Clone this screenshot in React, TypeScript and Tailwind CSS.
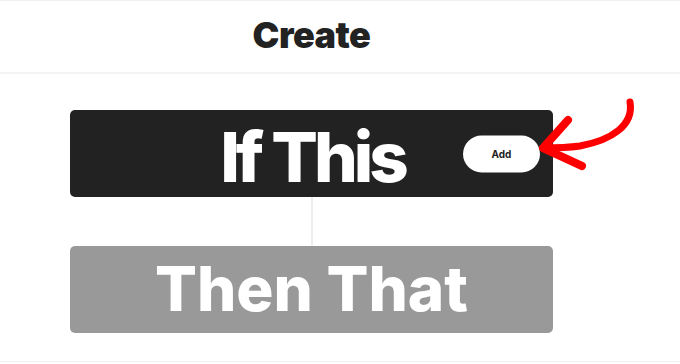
export default function App() {
  return (
    <div
      className="relative h-[364px] w-[680px] overflow-hidden bg-white text-[#222]"
      style={{ fontFamily: 'Inter, "Noto Sans", sans-serif' }}
    >
      <div className="border-t border-[#f0f0f0]">
        {/* Header */}
        <div className="h-[73px] border-b-2 border-[#f4f4f4]">
          <div className="w-[623px] h-full flex items-center justify-center">
            <h1 className="text-[36px] font-black tracking-[-0.5px] leading-none pb-1">Create</h1>
          </div>
        </div>

        <div className="w-[623px] px-[70px] pt-[36px] flex flex-col items-center">
          {/* If This */}
          <div className="relative w-full h-[87px] rounded-[5px] bg-[#222] flex items-center justify-center">
            <span className="text-white text-[69px] font-extrabold tracking-[-4px] leading-none pt-[8px] pl-[2px]">If This</span>
            <button className="absolute right-[13px] top-1/2 -translate-y-1/2 w-[77px] h-[37px] rounded-full bg-white text-[#222] text-[10px] font-bold">
              Add
            </button>
          </div>

          {/* connector */}
          <div className="w-[2px] h-[49px] bg-[#eeeeee]" />

          {/* Then That */}
          <div className="w-full h-[87px] rounded-[5px] bg-[#999] flex items-center justify-center">
            <span className="text-white text-[62px] font-extrabold tracking-[0px] leading-none pb-[2px]">Then That</span>
          </div>
        </div>

        <div className="mt-[28px] border-t border-[#f0f0f0]" />
      </div>

      {/* red annotation arrow */}
      <svg className="absolute left-0 top-0 pointer-events-none" width="680" height="364" viewBox="0 0 680 364">
        <g fill="none" stroke="#ff0000" strokeLinecap="round" strokeLinejoin="round">
          <path strokeWidth="7" d="M630 102 C 634 125, 612 140, 580 146 C 565 148, 552 148, 543 148" />
          <path strokeWidth="8" d="M568 120 L 543 148 L 582 166" />
        </g>
      </svg>
    </div>
  )
}
